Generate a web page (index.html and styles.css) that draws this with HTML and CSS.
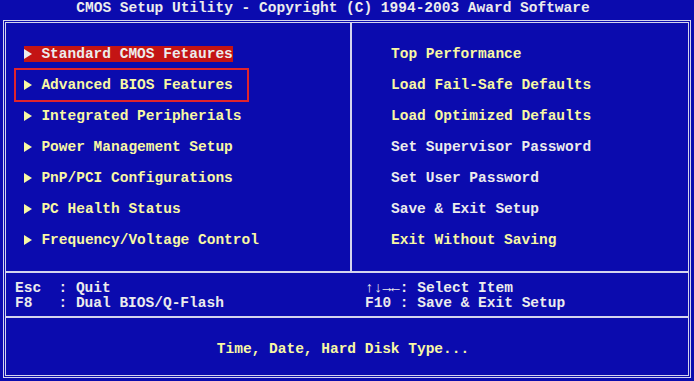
FILE: index.html
```html
<!DOCTYPE html>
<html lang="en">
<head>
  <meta charset="UTF-8">
  <meta name="viewport" content="width=device-width, initial-scale=1.0">
  <title>CMOS Setup Utility</title>
  <link rel="stylesheet" href="styles.css">
</head>
<body>
  <div class="title">CMOS Setup Utility - Copyright (C) 1994-2003 Award Software</div>
  <div class="frame">
    <div class="menu">
      <ul class="col col_left">
        <li class="item"><span class="pick active"><i class="arrow"></i> Standard CMOS Fetaures</span></li>
        <li class="item"><span class="pick marked"><i class="arrow"></i> Advanced BIOS Features</span></li>
        <li class="item"><span class="pick"><i class="arrow"></i> Integrated Peripherials</span></li>
        <li class="item"><span class="pick"><i class="arrow"></i> Power Management Setup</span></li>
        <li class="item"><span class="pick"><i class="arrow"></i> PnP/PCI Configurations</span></li>
        <li class="item"><span class="pick"><i class="arrow"></i> PC Health Status</span></li>
        <li class="item"><span class="pick"><i class="arrow"></i> Frequency/Voltage Control</span></li>
      </ul>
      <ul class="col col_right">
        <li class="item">Top Performance</li>
        <li class="item">Load Fail-Safe Defaults</li>
        <li class="item">Load Optimized Defaults</li>
        <li class="item white">Set Supervisor Password</li>
        <li class="item white">Set User Password</li>
        <li class="item white">Save &amp; Exit Setup</li>
        <li class="item">Exit Without Saving</li>
      </ul>
    </div>
    <div class="keys">
      <div class="key_col">Esc  : Quit
F8   : Dual BIOS/Q-Flash</div>
      <div class="key_col">↑↓→←: Select Item
F10 : Save &amp; Exit Setup</div>
    </div>
    <div class="help">Time, Date, Hard Disk Type...</div>
  </div>
</body>
</html>
```

FILE: styles.css
```css
* {
  margin: 0;
  padding: 0;
  box-sizing: border-box;
}
/* BIOS colours */
:root {
  --blue: #0b0bae;
  --line: #d4d4ee;
  --yellow: #f8f8a4;
  --white: #ececec;
  --red: #c41414;
}
body {
  width: 694px;
  height: 381px;
  overflow: hidden;
  background-color: var(--blue);
  color: var(--yellow);
  font-family: "Liberation Mono", "DejaVu Sans Mono", monospace;
  font-size: 14.5px;
  font-weight: bold;
}
/* top title bar */
.title {
  height: 20px;
  line-height: 16px;
  padding-right: 28px;
  text-align: center;
  color: var(--white);
  white-space: pre;
}
/* the big double-line box */
.frame {
  width: 688px;
  height: 358px;
  margin-left: 3px;
  border: 3px double var(--line);
  display: flex;
  flex-direction: column;
}
.menu {
  display: grid;
  grid-template-columns: 346px 1fr;
  height: 248px;
}
.col {
  list-style: none;
  padding-top: 15px;
}
.col_left {
  padding-left: 18px;
  border-right: 2px solid var(--line);
}
.col_right {
  padding-left: 39px;
}
.item {
  height: 31px;
  display: flex;
  align-items: center;
  white-space: pre;
}
.white {
  color: var(--white);
}
.pick {
  position: relative;
  display: flex;
  align-items: center;
  height: 16px;
  line-height: 16px;
}
/* current item */
.active {
  background-color: var(--red);
  color: var(--white);
}
/* red marker box drawn over the second item */
.marked::after {
  content: '';
  position: absolute;
  left: -10px;
  top: -9px;
  right: -16px;
  bottom: -9px;
  border: 2px solid #e0242c;
}
/* triangle bullet, one character cell wide */
.arrow {
  display: inline-block;
  width: 1ch;
  height: 10px;
  position: relative;
}
.arrow::before {
  content: '';
  position: absolute;
  left: 0;
  top: 0;
  border-left: 8px solid currentColor;
  border-top: 5px solid transparent;
  border-bottom: 5px solid transparent;
}
/* key hints */
.keys {
  display: grid;
  grid-template-columns: 350px 1fr;
  height: 47px;
  padding: 8px 0 0 9px;
  border-top: 2px solid var(--line);
  border-bottom: 2px solid var(--line);
  color: var(--white);
  line-height: 15px;
  white-space: pre;
}
.help {
  flex: 1;
  padding-top: 23px;
  padding-right: 8px;
  text-align: center;
  line-height: 16px;
}
```
